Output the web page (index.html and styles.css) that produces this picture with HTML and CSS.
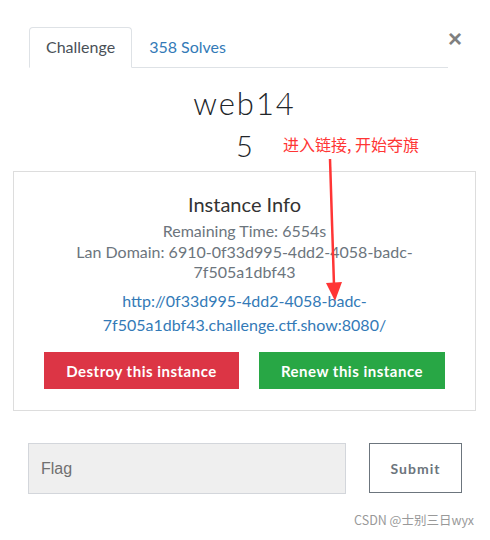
FILE: index.html
```html
<!DOCTYPE html>
<html lang="zh">
<head>
    <meta charset="UTF-8">
    <title>web14</title>
    <link rel="stylesheet" href="styles.css">
</head>
<body>
<div class="modal">
    <div class="modal-header">
        <ul class="nav-tabs">
            <li class="tab active">Challenge</li>
            <li class="tab"><a href="#">358 Solves</a></li>
        </ul>
        <button class="close">&times;</button>
    </div>

    <h2 class="chal-name">web14</h2>
    <h3 class="chal-value">5</h3>

    <div class="instance">
        <h4>Instance Info</h4>
        <p class="meta">Remaining Time: 6554s</p>
        <p class="meta">Lan Domain: 6910-0f33d995-4dd2-4058-badc-7f505a1dbf43</p>
        <p class="link"><a href="#">http://0f33d995-4dd2-4058-badc-7f505a1dbf43.challenge.ctf.show:8080/</a></p>
        <div class="actions">
            <button class="btn btn-danger">Destroy this instance</button>
            <button class="btn btn-success">Renew this instance</button>
        </div>
    </div>

    <div class="submit-row">
        <input class="flag-input" type="text" placeholder="Flag">
        <button class="btn-submit">Submit</button>
    </div>

    <div class="watermark">CSDN @士别三日wyx</div>

    <!-- 标注 -->
    <div class="note">进入链接, 开始夺旗</div>
    <svg class="arrow" width="30" height="150" viewBox="0 0 30 150">
        <line x1="10" y1="2" x2="14" y2="128" stroke="#ff3535" stroke-width="2.5"/>
        <polygon points="6,126 22,125 15,144" fill="#ff3535"/>
    </svg>
</div>
</body>
</html>
```

FILE: styles.css
```css
body {
    margin: 0;
    background: #fff;
    font-family: Lato, "Open Sans", sans-serif;
    color: #212529;
}

.modal {
    position: relative;
    width: 463px;
    padding: 27px 14px 0 13px;
}

.modal-header {
    display: flex;
    align-items: flex-start;
    padding: 0 14px 0 16px;
}

.nav-tabs {
    flex: 1;
    display: flex;
    list-style: none;
    margin: 0;
    padding: 0;
    border-bottom: 1px solid #dee2e6;
    height: 40px;
}

.tab {
    font-size: 16px;
    line-height: 38px;
    padding: 0 16px;
    color: #495057;
    border: 1px solid transparent;
    border-radius: 4px 4px 0 0;
}

.tab.active {
    border-color: #dee2e6 #dee2e6 #fff;
    background: #fff;
    height: 39px;
}

.tab a {
    color: #337ab7;
    text-decoration: none;
}

.close {
    border: 0;
    background: none;
    padding: 0;
    margin: 2px 0 0 0;
    width: 14px;
    font-size: 24px;
    line-height: 20px;
    font-weight: bold;
    color: #808080;
    font-family: "Liberation Sans", sans-serif;
}

.chal-name {
    text-align: center;
    font-weight: 300;
    font-size: 31px;
    letter-spacing: 2px;
    margin: 17px 0 0;
    line-height: 36px;
}

.chal-value {
    text-align: center;
    font-weight: 300;
    font-size: 29px;
    margin: 7px 0 0;
    line-height: 36px;
}

.instance {
    border: 1px solid #ddd;
    margin-top: 7px;
    padding: 18px 20px 21px;
    text-align: center;
}

.instance h4 {
    margin: 0 0 3px;
    font-size: 20px;
    font-weight: 400;
    line-height: 28px;
    color: #333;
}

.meta {
    margin: 0;
    font-size: 16px;
    line-height: 20px;
    color: #6c757d;
}

.meta + .meta {
    margin-top: 1px;
    padding: 0 38px;
}

.link {
    margin: 7px 0 0;
    font-size: 16px;
    line-height: 24px;
}

.link a {
    color: #337ab7;
    text-decoration: none;
}

.actions {
    display: flex;
    justify-content: center;
    gap: 20px;
    margin-top: 15px;
}

.btn {
    border: 0;
    border-radius: 0;
    height: 37px;
    font-family: Lato, sans-serif;
    font-size: 15px;
    font-weight: bold;
    letter-spacing: 0.5px;
    color: #fff;
}

.btn-danger {
    background: #dc3545;
    width: 195px;
}

.btn-success {
    background: #28a745;
    width: 186px;
}

.submit-row {
    display: flex;
    gap: 23px;
    margin: 32px 0 0 15px;
}

.flag-input {
    width: 318px;
    height: 51px;
    box-sizing: border-box;
    border: 1px solid #d3d6db;
    background: #efefef;
    padding: 0 12px;
    font-family: "Liberation Sans", Arial, sans-serif;
    font-size: 16px;
}

.flag-input::placeholder {
    color: #707070;
}

.btn-submit {
    width: 93px;
    height: 50px;
    background: #fff;
    border: 1px solid #6c757d;
    color: #6c757d;
    font-family: Lato, sans-serif;
    font-size: 14px;
    font-weight: bold;
    letter-spacing: 1px;
}

.watermark {
    text-align: right;
    margin-top: 16px;
    padding-right: 2px;
    font-family: "Noto Sans CJK SC", sans-serif;
    font-size: 12.5px;
    color: #999;
}

.note {
    position: absolute;
    left: 283px;
    top: 132px;
    font-family: "Noto Sans CJK SC", sans-serif;
    font-size: 16px;
    color: #ff3535;
}

.arrow {
    position: absolute;
    left: 320px;
    top: 157px;
}
```
